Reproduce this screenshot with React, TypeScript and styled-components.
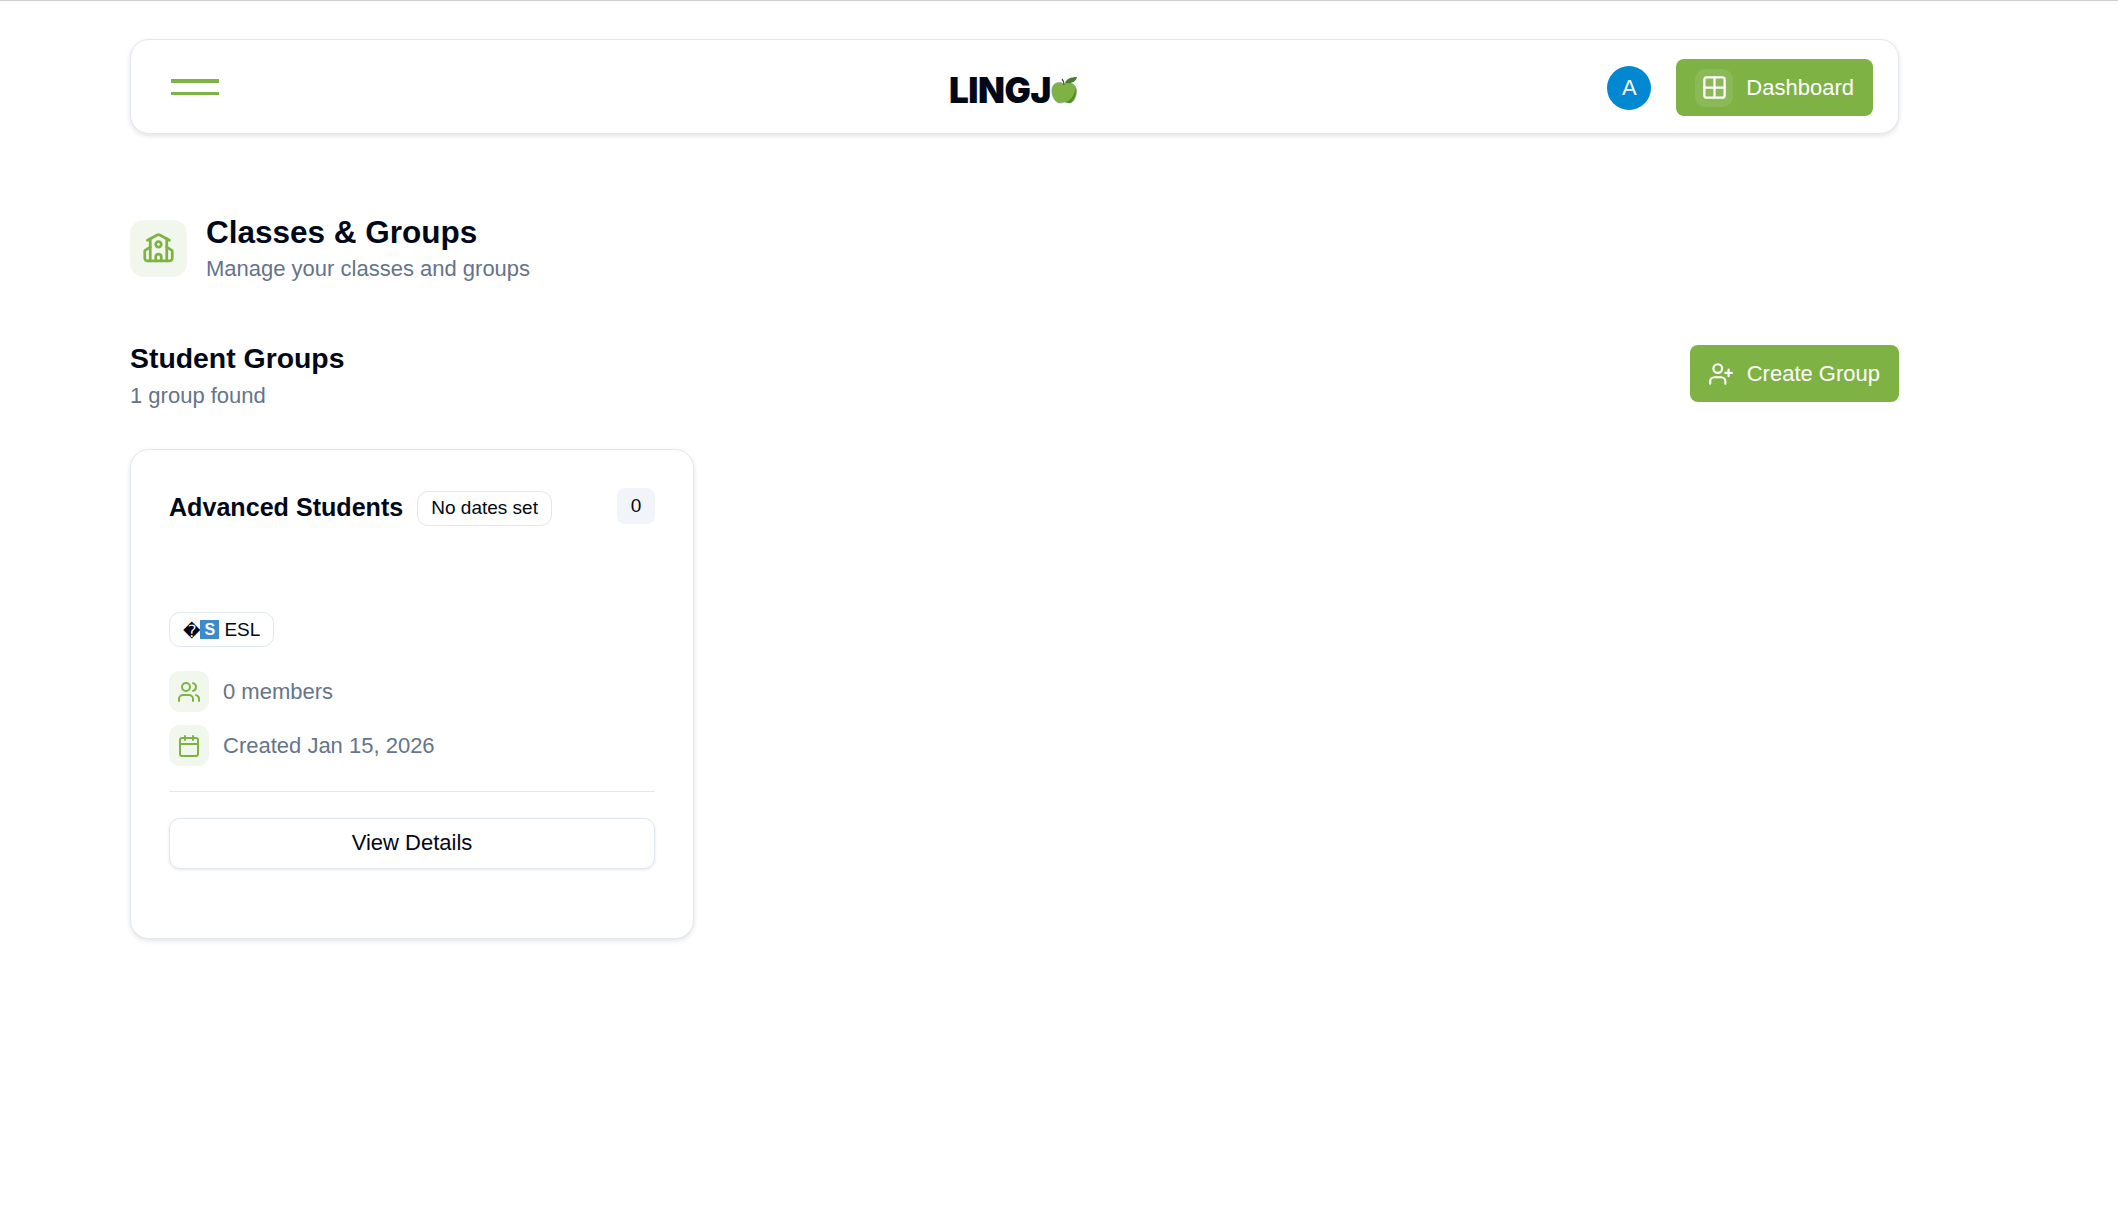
import React from "react";
import styled, { createGlobalStyle } from "styled-components";
import { Calendar, Grid2x2, School, UserPlus, Users } from "lucide-react";

const GlobalStyle = createGlobalStyle`
  html, body {
    margin: 0;
    background: #fff;
  }
  body {
    font-family: "Liberation Sans", Arial, sans-serif;
    color: #020817;
  }
  * {
    box-sizing: border-box;
  }
`;

const Page = styled.div`
  min-height: 1210px;
  border-top: 1px solid #cfcfcf;
  padding: 38px 219px 0 130px;
`;

const Header = styled.header`
  height: 95px;
  display: grid;
  grid-template-columns: 1fr auto 1fr;
  align-items: center;
  padding: 2px 25px 0 40px;
  background: #fff;
  border: 1px solid #e2e8f0;
  border-radius: 19px;
  box-shadow: 0 2px 5px rgba(15, 23, 42, 0.12);
`;

const MenuButton = styled.div`
  width: 48px;
  height: 16px;
  margin-top: -2px;
  border-top: 4px solid #7fb244;
  border-bottom: 3px solid #7fb244;
`;

const Logo = styled.div`
  display: flex;
  align-items: center;
  margin: 5px 17px 0 0;
  font-family: Inter, "Liberation Sans", sans-serif;
  font-size: 35px;
  font-weight: 900;
  letter-spacing: -0.4px;
  color: #020817;
`;

const HeaderActions = styled.div`
  display: flex;
  align-items: center;
  justify-content: flex-end;
  gap: 25px;
`;

const Avatar = styled.div`
  width: 44px;
  height: 44px;
  display: flex;
  align-items: center;
  justify-content: center;
  border-radius: 50%;
  background: #0288d1;
  color: #fff;
  font-size: 22px;
`;

const PrimaryButton = styled.button<{ $gap: number; $padding: string; $offset?: number }>`
  height: 57px;
  display: flex;
  align-items: center;
  gap: ${(props) => props.$gap}px;
  margin-top: ${(props) => props.$offset ?? 0}px;
  padding: ${(props) => props.$padding};
  border: 0;
  border-radius: 8px;
  background: #7fb244;
  color: #fff;
  font-family: "Liberation Sans", Arial, sans-serif;
  font-size: 22px;
`;

const ButtonIcon = styled.span`
  width: 38px;
  height: 38px;
  display: flex;
  align-items: center;
  justify-content: center;
  border-radius: 11px;
  background: rgba(255, 255, 255, 0.1);
`;

const PageHeading = styled.section`
  display: flex;
  align-items: center;
  gap: 19px;
  margin-top: 79px;
`;

const HeadingIcon = styled.div`
  width: 57px;
  height: 57px;
  display: flex;
  align-items: center;
  justify-content: center;
  border-radius: 14px;
  background: #f2f7ed;
  color: #7fb244;
`;

const HeadingBlock = styled.div`
  margin-top: -2px;
`;

const PageTitle = styled.h1`
  margin: 0;
  font-size: 31.5px;
  line-height: 42px;
  font-weight: 700;
`;

const MutedText = styled.p`
  margin: 1px 0 0;
  font-size: 22px;
  line-height: 30px;
  color: #64748b;
`;

const SectionRow = styled.section`
  display: flex;
  align-items: flex-start;
  justify-content: space-between;
  margin-top: 55px;
`;

const SectionTitle = styled.h2`
  margin: 0 0 4px;
  font-size: 28.4px;
  line-height: 38px;
  font-weight: 700;
`;

const Card = styled.article`
  width: 564px;
  height: 490px;
  margin-top: 38px;
  padding: 38px;
  background: #fff;
  border: 1px solid #e2e8f0;
  border-radius: 19px;
  box-shadow: 0 2px 5px rgba(15, 23, 42, 0.12);
`;

const CardTop = styled.div`
  height: 124px;
  display: flex;
  align-items: flex-start;
  justify-content: space-between;
`;

const CardTitleRow = styled.div`
  display: flex;
  align-items: center;
  gap: 14px;
  padding-top: 2px;
`;

const CardTitle = styled.h3`
  margin: 0;
  padding-bottom: 2px;
  font-size: 25.1px;
  line-height: 34px;
  font-weight: 700;
`;

const Pill = styled.span`
  display: inline-flex;
  align-items: center;
  height: 35px;
  padding: 0 13px;
  border: 1px solid #e2e8f0;
  border-radius: 11px;
  background: #fff;
  font-size: 19px;
  color: #020817;
`;

const CountBadge = styled.span`
  width: 38px;
  height: 36px;
  display: flex;
  align-items: center;
  justify-content: center;
  border-radius: 8px;
  background: #f1f5f9;
  font-size: 19px;
`;

const BrokenGlyph = styled.span`
  font-family: "DejaVu Sans", sans-serif;
  font-size: 17px;
  margin-top: 2px;
`;

const FlagLetter = styled.span`
  width: 19px;
  height: 19px;
  display: inline-flex;
  align-items: center;
  justify-content: center;
  margin-right: 5px;
  background: #3d8bc9;
  color: #fff;
  font-size: 16px;
  font-weight: 700;
`;

const MetaList = styled.div`
  display: flex;
  flex-direction: column;
  gap: 13px;
  margin-top: 24px;
`;

const MetaRow = styled.div`
  display: flex;
  align-items: center;
  gap: 14px;
  font-size: 22px;
  color: #64748b;
`;

const MetaIcon = styled.span`
  width: 40px;
  height: 41px;
  display: flex;
  align-items: center;
  justify-content: center;
  border-radius: 11px;
  background: #f2f7ed;
  color: #7fb244;
`;

const Divider = styled.hr`
  height: 1px;
  margin: 25px 0 26px;
  border: 0;
  background: #e2e8f0;
`;

const OutlineButton = styled.button`
  width: 100%;
  height: 51px;
  padding-bottom: 2px;
  border: 1px solid #e2e8f0;
  border-radius: 11px;
  background: #fff;
  box-shadow: 0 1px 3px rgba(15, 23, 42, 0.1);
  color: #020817;
  font-family: "Liberation Sans", Arial, sans-serif;
  font-size: 22px;
`;

const AppleLogo = () => (
  <svg width="27" height="28" viewBox="0 0 27 28">
    <path d="M13 8C9 5 2 6 1 13c-1 6 3 14 8 14 2 0 3-1 4.500-1s3 1 5 1c4 0 7-6 7-12 0-7-7-10-12.500-7z" fill="#7fb244" stroke="#8a9a80" strokeWidth="0.6" />
    <path d="M25 12c1 7-3 15-7 15-2 0-2-1-4-1 6-1 9-7 11-14z" fill="#558b2f" />
    <path d="M14 7c1-4 6-6 12-6-1 5-6 7-12 6z" fill="#4b7c35" />
    <path d="M13 9c0-3-1-5-2-6" fill="none" stroke="#4a4a3f" strokeWidth="1.300" />
  </svg>
);

export default function App() {
  return (
    <>
      <GlobalStyle />
      <Page>
        <Header>
          <MenuButton />
          <Logo>
            LINGJ
            <AppleLogo />
          </Logo>
          <HeaderActions>
            <Avatar>A</Avatar>
            <PrimaryButton $gap={13} $padding="0 19px">
              <ButtonIcon>
                <Grid2x2 size={27} strokeWidth={2} />
              </ButtonIcon>
              Dashboard
            </PrimaryButton>
          </HeaderActions>
        </Header>

        <PageHeading>
          <HeadingIcon>
            <School size={33} strokeWidth={2} />
          </HeadingIcon>
          <HeadingBlock>
            <PageTitle>Classes &amp; Groups</PageTitle>
            <MutedText>Manage your classes and groups</MutedText>
          </HeadingBlock>
        </PageHeading>

        <SectionRow>
          <div>
            <SectionTitle>Student Groups</SectionTitle>
            <MutedText>1 group found</MutedText>
          </div>
          <PrimaryButton $gap={13} $padding="0 19px 0 18px" $offset={6}>
            <UserPlus size={26} strokeWidth={2} />
            Create Group
          </PrimaryButton>
        </SectionRow>

        <Card>
          <CardTop>
            <CardTitleRow>
              <CardTitle>Advanced Students</CardTitle>
              <Pill>No dates set</Pill>
            </CardTitleRow>
            <CountBadge>0</CountBadge>
          </CardTop>
          <Pill>
            <BrokenGlyph>�</BrokenGlyph>
            <FlagLetter>S</FlagLetter>
            ESL
          </Pill>
          <MetaList>
            <MetaRow>
              <MetaIcon>
                <Users size={24} strokeWidth={2} />
              </MetaIcon>
              0 members
            </MetaRow>
            <MetaRow>
              <MetaIcon>
                <Calendar size={24} strokeWidth={2} />
              </MetaIcon>
              Created Jan 15, 2026
            </MetaRow>
          </MetaList>
          <Divider />
          <OutlineButton>View Details</OutlineButton>
        </Card>
      </Page>
    </>
  );
}
